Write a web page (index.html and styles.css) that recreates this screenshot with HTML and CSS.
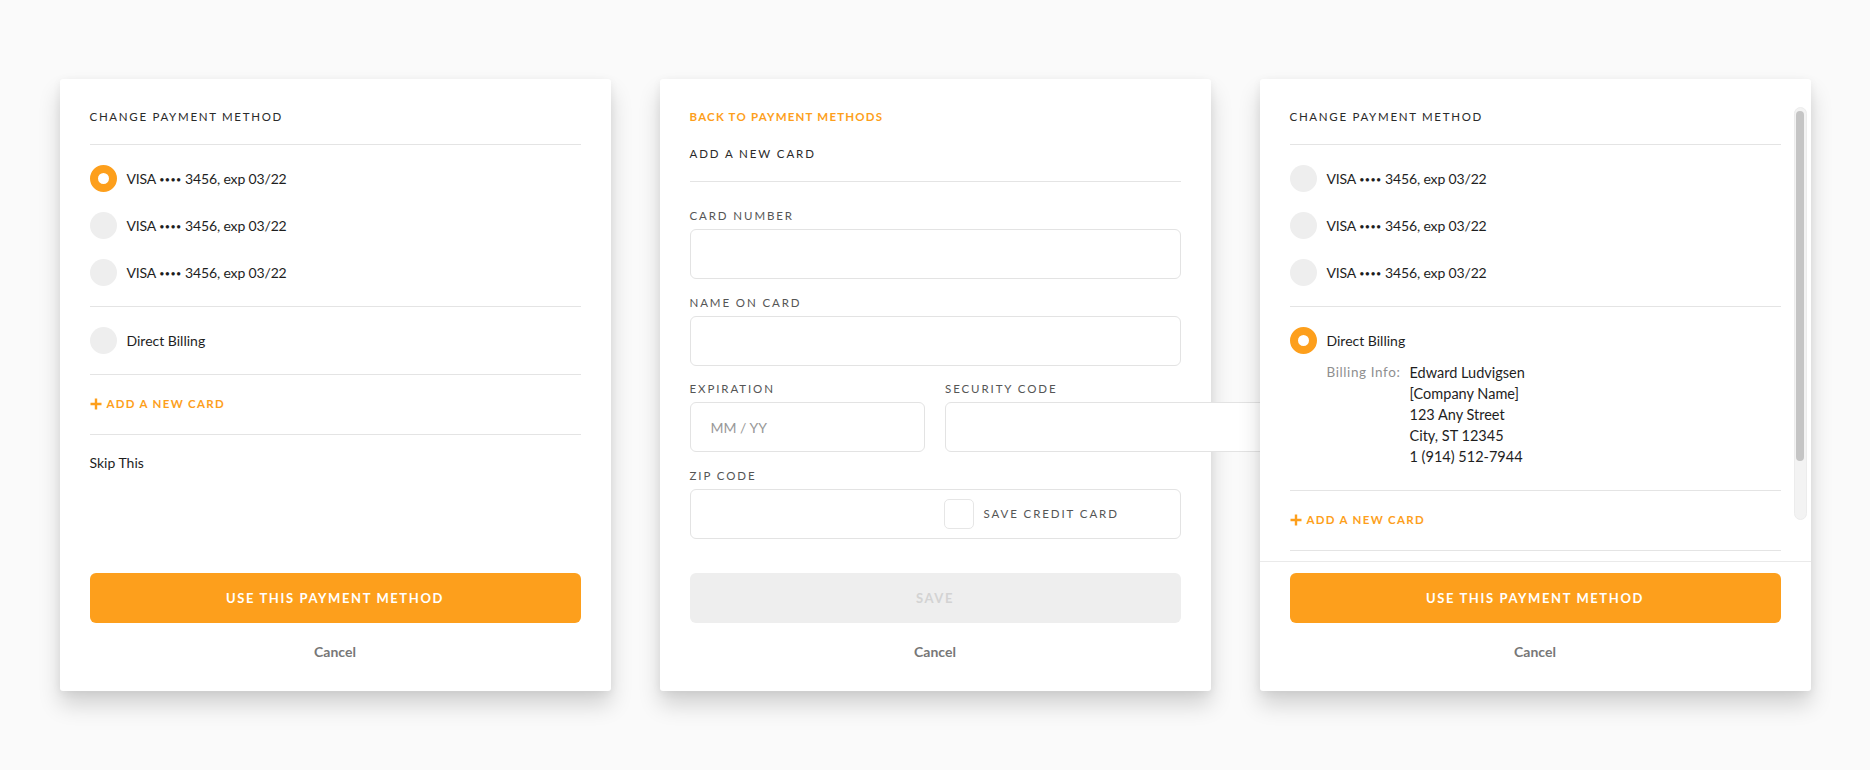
FILE: index.html
```html
<!DOCTYPE html>
<html lang="en">
<head>
<meta charset="utf-8">
<title>Payment methods</title>
<link rel="stylesheet" href="styles.css">
</head>
<body>
<main class="stage">

  <section class="card">
    <div class="card-body">
      <h2 class="title">CHANGE PAYMENT METHOD</h2>
      <div class="options">
        <div class="option"><span class="radio is-on"></span><span class="card-line">VISA <span class="dots">••••</span> 3456, exp 03/22</span></div>
        <div class="option"><span class="radio"></span><span class="card-line">VISA <span class="dots">••••</span> 3456, exp 03/22</span></div>
        <div class="option"><span class="radio"></span><span class="card-line">VISA <span class="dots">••••</span> 3456, exp 03/22</span></div>
      </div>
      <div class="options">
        <div class="option"><span class="radio"></span><span>Direct Billing</span></div>
      </div>
      <div class="add-row">
        <span class="add-link"><svg class="plus" viewBox="0 0 12 12" width="12" height="12"><path d="M6 0.5V11.5M0.5 6H11.5" stroke="currentColor" stroke-width="2.4" fill="none"/></svg>ADD A NEW CARD</span>
      </div>
      <div class="skip">Skip This</div>
    </div>
    <div class="card-foot">
      <button class="btn btn-primary" type="button">USE THIS PAYMENT METHOD</button>
      <div class="cancel">Cancel</div>
    </div>
  </section>

  <section class="card">
    <div class="card-body">
      <div class="title-block">
        <div class="back-link">BACK TO PAYMENT METHODS</div>
        <h2 class="subtitle">ADD A NEW CARD</h2>
      </div>
      <div class="form">
        <div class="field">
          <div class="label">CARD NUMBER</div>
          <div class="input"></div>
        </div>
        <div class="field">
          <div class="label">NAME ON CARD</div>
          <div class="input"></div>
        </div>
        <div class="field-pair">
          <div class="field">
            <div class="label">EXPIRATION</div>
            <div class="input"><span class="placeholder">MM / YY</span></div>
          </div>
          <div class="field">
            <div class="label">SECURITY CODE</div>
            <div class="input input-wide"></div>
          </div>
        </div>
        <div class="field">
          <div class="label">ZIP CODE</div>
          <div class="input input-split">
            <span class="zip-space"></span>
            <span class="check-wrap"><span class="checkbox"></span><span class="check-label">SAVE CREDIT CARD</span></span>
          </div>
        </div>
      </div>
    </div>
    <div class="card-foot">
      <button class="btn btn-disabled" type="button">SAVE</button>
      <div class="cancel">Cancel</div>
    </div>
  </section>

  <section class="card">
    <div class="card-body card-body-scroll">
      <h2 class="title">CHANGE PAYMENT METHOD</h2>
      <div class="options">
        <div class="option"><span class="radio"></span><span class="card-line">VISA <span class="dots">••••</span> 3456, exp 03/22</span></div>
        <div class="option"><span class="radio"></span><span class="card-line">VISA <span class="dots">••••</span> 3456, exp 03/22</span></div>
        <div class="option"><span class="radio"></span><span class="card-line">VISA <span class="dots">••••</span> 3456, exp 03/22</span></div>
      </div>
      <div class="options options-billing">
        <div class="option"><span class="radio is-on"></span><span>Direct Billing</span></div>
        <div class="billing">
          <div class="billing-label">Billing Info:</div>
          <div class="billing-lines">
            <div>Edward Ludvigsen</div>
            <div>[Company Name]</div>
            <div>123 Any Street</div>
            <div>City, ST 12345</div>
            <div>1 (914) 512-7944</div>
          </div>
        </div>
      </div>
      <div class="add-row">
        <span class="add-link"><svg class="plus" viewBox="0 0 12 12" width="12" height="12"><path d="M6 0.5V11.5M0.5 6H11.5" stroke="currentColor" stroke-width="2.4" fill="none"/></svg>ADD A NEW CARD</span>
      </div>
      <div class="skip">Skip This</div>
    </div>
    <div class="card-foot card-foot-lined">
      <button class="btn btn-primary" type="button">USE THIS PAYMENT METHOD</button>
      <div class="cancel">Cancel</div>
    </div>
    <div class="scroll-track"><div class="scroll-thumb"></div></div>
  </section>

</main>
</body>
</html>
```

FILE: styles.css
```css
* { box-sizing: border-box; }

html, body {
  margin: 0;
  padding: 0;
  height: 100%;
}

body {
  background: #fafafa;
  font-family: Lato, "Open Sans", "Liberation Sans", sans-serif;
  color: #1e1e1e;
  font-size: 14px;
}

.stage {
  height: 770px;
  display: flex;
  justify-content: center;
  align-items: center;
  gap: 49px;
}

.card {
  position: relative;
  width: 551px;
  height: 612px;
  background: #fff;
  border-radius: 3px;
  box-shadow: 0 14px 22px rgba(0, 0, 0, 0.16), 0 2px 8px rgba(0, 0, 0, 0.06);
  display: flex;
  flex-direction: column;
}

.card-body {
  height: 482px;
  padding: 30px 30px 0 30px;
  flex: none;
}

.card-body-scroll {
  overflow: hidden;
}

.title {
  margin: 0;
  font-size: 11.5px;
  line-height: 16px;
  font-weight: 400;
  letter-spacing: 1.7px;
  color: #2a2a2a;
  padding-bottom: 19px;
  border-bottom: 1px solid #e4e4e4;
}

.options {
  padding: 20px 0;
  display: flex;
  flex-direction: column;
  gap: 20px;
  border-bottom: 1px solid #e4e4e4;
}

.option {
  display: flex;
  align-items: center;
  gap: 10px;
  height: 27px;
  font-size: 14px;
  color: #1e1e1e;
}

.card-line {
  letter-spacing: -0.15px;
}

.dots {
  font-size: 9px;
  letter-spacing: 0.4px;
  position: relative;
  top: -1px;
}

.radio {
  width: 27px;
  height: 27px;
  border-radius: 50%;
  background: #eeeeee;
  flex: none;
}

.radio.is-on {
  background: #fff;
  border: 8.5px solid #fd9f1c;
}

.options-billing {
  gap: 0;
  padding-bottom: 23px;
}

.billing {
  margin-top: 8px;
  margin-left: 37px;
  display: grid;
  grid-template-columns: 83px 1fr;
  line-height: 21px;
}

.billing-label {
  color: #8f8f8f;
  font-size: 13.5px;
  letter-spacing: 0.6px;
}

.billing-lines {
  color: #1e1e1e;
  font-size: 14.5px;
}

.add-row {
  padding: 21px 0;
  border-bottom: 1px solid #e4e4e4;
  line-height: 16px;
}

.add-link {
  display: inline-flex;
  align-items: center;
  gap: 5px;
  color: #fd9f1c;
  font-weight: 700;
  font-size: 11.5px;
  letter-spacing: 1.3px;
}

.plus {
  display: block;
}

.skip {
  padding-top: 20px;
  line-height: 16px;
  font-size: 14px;
  color: #1e1e1e;
}

.card-foot {
  padding: 12px 30px 0 30px;
  display: flex;
  flex-direction: column;
  align-items: stretch;
  flex: 1;
}

.card-foot-lined {
  border-top: 1px solid #eaeaea;
  padding-top: 11px;
}

.btn {
  height: 50px;
  border: 0;
  border-radius: 6px;
  font-family: inherit;
  font-weight: 700;
  font-size: 13px;
  letter-spacing: 1.6px;
  cursor: pointer;
}

.btn-primary {
  background: #fd9f1c;
  color: #fff;
}

.btn-disabled {
  background: #eeeeee;
  color: #d3d3d3;
}

.cancel {
  margin-top: 21px;
  text-align: center;
  font-size: 14px;
  line-height: 16px;
  font-weight: 700;
  color: #777;
}

/* Add card form */
.title-block {
  padding-bottom: 19px;
  border-bottom: 1px solid #e4e4e4;
}

.back-link {
  font-size: 11.5px;
  line-height: 16px;
  font-weight: 700;
  letter-spacing: 1.2px;
  color: #fd9f1c;
}

.subtitle {
  margin: 21px 0 0 0;
  font-size: 11.5px;
  line-height: 16px;
  font-weight: 400;
  letter-spacing: 1.9px;
  color: #2a2a2a;
}

.form {
  padding-top: 27px;
  display: flex;
  flex-direction: column;
  gap: 16.7px;
}

.field {
  min-width: 0;
}

.field-pair {
  display: grid;
  grid-template-columns: minmax(0, 1fr) minmax(0, 1fr);
  gap: 20px;
}

.label {
  font-size: 11.5px;
  line-height: 14px;
  letter-spacing: 1.9px;
  color: #555;
  margin-bottom: 6px;
  white-space: nowrap;
}

.input {
  height: 50px;
  border: 1.5px solid #e3e3e3;
  border-radius: 6px;
  background: #fff;
  display: flex;
  align-items: center;
  padding-left: 20px;
}

.input-wide {
  width: 330px;
}

.placeholder {
  color: #999;
  font-size: 14px;
}

.input-split {
  padding-left: 0;
  display: grid;
  grid-template-columns: minmax(0, 1fr) minmax(0, 1fr);
  column-gap: 20px;
}

.check-wrap {
  display: flex;
  align-items: center;
  gap: 10px;
}

.checkbox {
  width: 30px;
  height: 30px;
  border: 1.5px solid #e6e6e6;
  border-radius: 5px;
  margin-left: -1.5px;
  flex: none;
}

.check-label {
  font-size: 11.5px;
  line-height: 16px;
  letter-spacing: 1.9px;
  color: #555;
  white-space: nowrap;
}

/* Scrollbar overlay on third card */
.scroll-track {
  position: absolute;
  top: 28px;
  right: 4px;
  width: 13px;
  height: 413px;
  background: #f3f3f3;
  border: 1px solid #ececec;
  border-radius: 7px;
}

.scroll-thumb {
  margin: 3px auto 0 auto;
  width: 8px;
  height: 350px;
  background: #c5c5c5;
  border-radius: 4px;
}
```
